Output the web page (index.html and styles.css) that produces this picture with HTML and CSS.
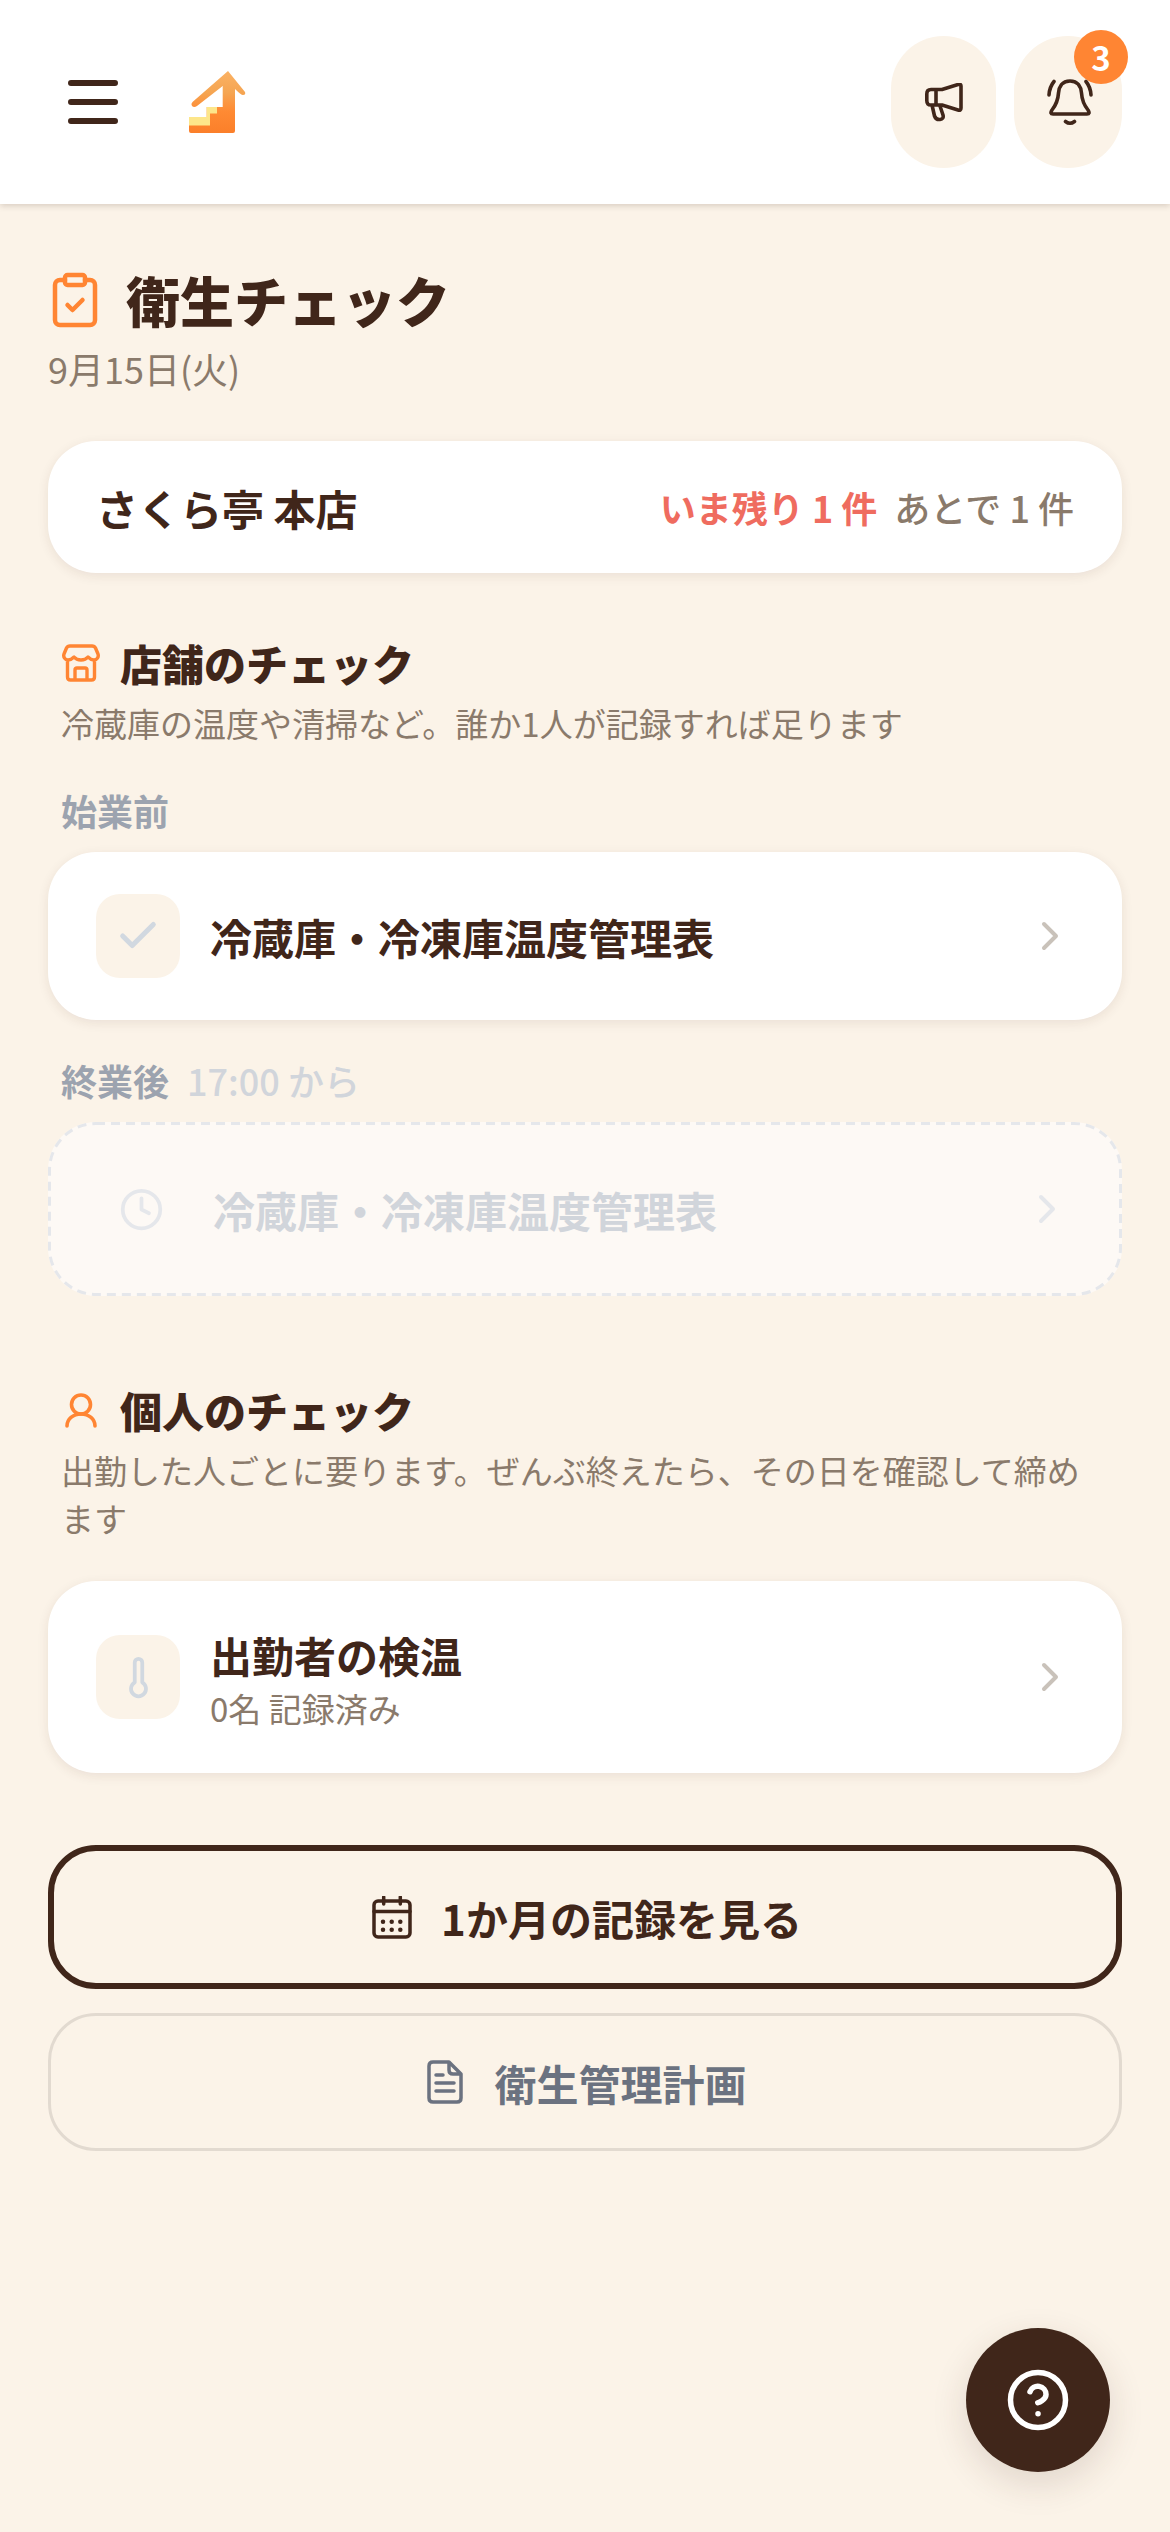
FILE: index.html
```html
<!DOCTYPE html>
<html lang="ja">
<head>
<meta charset="utf-8">
<title>衛生チェック</title>
<link rel="stylesheet" href="styles.css">
</head>
<body>
<header class="topbar">
  <div class="topbar-left">
    <svg class="menu-icon" viewBox="0 0 50 44"><path d="M3 3h44M3 22h44M3 41h44"/></svg>
    <svg class="logo" viewBox="0 0 57 63">
      <defs><linearGradient id="lg" x1="0" y1="0" x2="0" y2="1"><stop offset="0" stop-color="#fbb264"/><stop offset=".35" stop-color="#f5a552"/><stop offset=".65" stop-color="#ff8a33"/><stop offset="1" stop-color="#fb7f2a"/></linearGradient></defs>
      <path fill="url(#lg)" d="M39 0L56 21Q57 24 54 24Q52 24 46 18V60Q46 62 44 62H2Q0 62 0 60V46H17.7V36H33.7V15L8 35Q5 37 3 35Q1.5 33 3.5 31Z"/>
      <path fill="#fde68a" d="M0 46H17.7V36H28V42.500H21V54.500H0Z"/>
    </svg>
  </div>
  <div class="topbar-right">
    <div class="pill pill-a">
      <svg class="megaphone" viewBox="0 0 38 39"><path d="M10 6.500H17L33 1.500Q36 .5 36 3V25Q36 28 33 27L17 22H6Q1.800 22 1.800 17.500V11Q1.800 6.500 6 6.500ZM11 6.500V22M7 22L9.500 33Q11 37 15 36.500Q19 36 18 32L15 23"/></svg>
    </div>
    <div class="pill pill-b">
      <svg class="bell" viewBox="0 0 46 47"><path d="M23 2C15 2 12 8 11.500 14C11 22 9 26 5 31Q2.500 35 6 35H40Q43.500 35 41 31C37 26 35 22 34.500 14C34 8 31 2 23 2ZM18.500 42.500Q23 46 27.500 42.500M2 16Q2.500 8 7 2.500M44 16Q43.500 8 39 2.500"/></svg>
      <span class="badge">3</span>
    </div>
  </div>
</header>

<main class="page">
  <div class="title-row">
    <svg class="icon-title" viewBox="0 0 24 24"><rect x="8" y="2" width="8" height="4" rx="1"/><path d="M16 4h2a2 2 0 0 1 2 2v14a2 2 0 0 1-2 2H6a2 2 0 0 1-2-2V6a2 2 0 0 1 2-2h2"/><path d="m9 14 2 2 4-4"/></svg>
    <h1 class="title">衛生チェック</h1>
  </div>
  <p class="date">9月15日(火)</p>

  <section class="store-card">
    <span class="store-name">さくら亭 本店</span>
    <span class="counts"><span class="count-now">いま残り 1 件</span><span class="count-later">あとで 1 件</span></span>
  </section>

  <section class="section section-store">
    <div class="section-head">
      <svg class="icon-store" viewBox="0 0 38 38"><path d="M8 2H30Q32.500 2 33.500 4L36 10C37 13 35 16 32 16C29.500 16 28 15 26 13C24 15.500 22 16 19 16C16 16 14 15.500 12 13C10 15 8.500 16 6 16C3 16 1 13 2 10L4.500 4Q5.500 2 8 2ZM5.500 16V33Q5.500 36 8.500 36H29.500Q32.500 36 32.500 33V16M13 36V26Q13 24 15 24H23Q25 24 25 26V36"/></svg>
      <h2 class="section-title">店舗のチェック</h2>
    </div>
    <p class="section-sub">冷蔵庫の温度や清掃など。誰か1人が記録すれば足ります</p>

    <div class="slot-label">始業前</div>
    <a class="card">
      <span class="icon-box"><svg class="icon-check" viewBox="0 0 24 24"><path d="M20 6 9 17l-5-5"/></svg></span>
      <span class="card-body"><span class="card-title">冷蔵庫・冷凍庫温度管理表</span></span>
      <svg class="chevron" viewBox="0 0 24 24"><path d="m9 18 6-6-6-6"/></svg>
    </a>

    <div class="slot-label slot-label-later">終業後<span class="slot-time">17:00 から</span></div>
    <a class="card card-locked">
      <svg class="dash-frame"><rect class="dash-rect"/></svg>
      <span class="icon-box icon-box-plain"><svg class="icon-clock" viewBox="0 0 24 24"><circle cx="12" cy="12" r="10"/><path d="M12 6v6l4 2"/></svg></span>
      <span class="card-body"><span class="card-title">冷蔵庫・冷凍庫温度管理表</span></span>
      <svg class="chevron" viewBox="0 0 24 24"><path d="m9 18 6-6-6-6"/></svg>
    </a>
  </section>

  <section class="section section-person">
    <div class="section-head">
      <svg class="icon-user" viewBox="0 0 32 35"><circle cx="16" cy="11.500" r="9.500"/><path d="M2 33C2 26 8 21 16 21C24 21 30 26 30 33"/></svg>
      <h2 class="section-title">個人のチェック</h2>
    </div>
    <p class="section-sub">出勤した人ごとに要ります。ぜんぶ終えたら、その日を確認して締めます</p>
    <a class="card card-person">
      <span class="icon-box"><svg class="icon-thermo" viewBox="0 0 24 24"><path d="M14 4v10.54a4 4 0 1 1-4 0V4a2 2 0 0 1 4 0Z"/></svg></span>
      <span class="card-body"><span class="card-title">出勤者の検温</span><span class="card-sub">0名 記録済み</span></span>
      <svg class="chevron" viewBox="0 0 24 24"><path d="m9 18 6-6-6-6"/></svg>
    </a>
  </section>

  <a class="btn btn-primary">
    <svg class="icon-cal" viewBox="0 0 40 43"><rect x="2" y="5" width="36" height="36" rx="4"/><path d="M2 15.500H38M11.700 1V8M28.300 1V8"/><path class="dots" d="M11 25.700h.01M19.700 25.700h.01M28.300 25.700h.01M11 33.700h.01M19.700 33.700h.01M28.300 33.700h.01"/></svg>
    <span>1か月の記録を見る</span>
  </a>
  <a class="btn btn-secondary">
    <svg class="icon-doc" viewBox="0 0 36 44"><path d="M6 2H22L34 14V38Q34 42 30 42H6Q2 42 2 38V6Q2 2 6 2ZM22 2V10Q22 14 26 14H34M9 15H16M9 23H27M9 31H27"/></svg>
    <span>衛生管理計画</span>
  </a>
</main>

<button class="fab" type="button" aria-label="ヘルプ">
  <svg class="icon-help" viewBox="0 0 24 24"><circle cx="12" cy="12" r="10"/><path d="M9.090 9a3 3 0 0 1 5.830 1c0 2-3 3-3 3"/><path d="M12 17h.01"/></svg>
</button>
</body>
</html>
```
FILE: styles.css
```css
* { box-sizing: border-box; }
html, body { margin: 0; padding: 0; }
body {
  width: 1170px;
  min-height: 2532px;
  background: #fbf3e8;
  color: #40261a;
  font-family: "Noto Sans CJK JP", "Noto Sans", sans-serif;
  position: relative;
}
svg { display: block; flex: none; fill: none; stroke-linecap: round; stroke-linejoin: round; }
h1, h2, p { margin: 0; }

.topbar {
  height: 204px;
  background: #fff;
  display: flex;
  justify-content: space-between;
  align-items: center;
  padding: 0 48px 0 68px;
  box-shadow: 0 2px 6px rgba(64, 38, 26, .18);
}
.topbar-left { display: flex; align-items: center; gap: 71px; }
.menu-icon { width: 50px; height: 44px; stroke: #40261a; stroke-width: 6; margin-top: 0; }
.logo { width: 57px; height: 63px; }
.topbar-right { display: flex; gap: 18px; }
.pill {
  height: 132px;
  background: #fbf3e8;
  border-radius: 54px;
  display: flex;
  align-items: center;
  justify-content: center;
  position: relative;
}
.pill-a { width: 105px; }
.pill-b { width: 108px; }
.megaphone { width: 38px; height: 39px; stroke: #40261a; stroke-width: 3.6; }
.bell { width: 46px; height: 47px; stroke: #40261a; stroke-width: 3.6; margin-left: 3px; }
.badge {
  position: absolute;
  top: -6px;
  right: -6px;
  width: 54px;
  height: 54px;
  border-radius: 50%;
  background: #ff8533;
  color: #fff;
  font-size: 33px;
  font-weight: 700;
  line-height: 54px;
  text-align: center;
}

.page { padding: 63px 48px 0; }
.title-row { display: flex; align-items: center; gap: 21px; margin-left: -3px; }
.icon-title { width: 60px; height: 60px; stroke: #ff8533; stroke-width: 1.8; }
.title { font-size: 54px; font-weight: 900; line-height: 66px; }
.date { font-size: 36px; line-height: 48px; color: #8a7a6b; margin-top: 11px; }

.store-card {
  height: 132px;
  margin-top: 49px;
  background: #fff;
  border-radius: 48px;
  padding: 0 48px;
  display: flex;
  align-items: center;
  justify-content: space-between;
  box-shadow: 0 3px 12px rgba(64, 38, 26, .09);
}
.store-name { font-size: 42px; font-weight: 700; }
.counts { display: flex; gap: 17px; font-size: 36px; }
.count-now { color: #ef6c5f; font-weight: 700; }
.count-later { color: #8a7a6b; font-weight: 500; }

.section-store { margin-top: 60px; }
.section-person { margin-top: 84px; }
.section-head { display: flex; align-items: center; height: 60px; padding-left: 14px; }
.section-title { font-size: 42px; font-weight: 900; line-height: 60px; }
.icon-store { width: 38px; height: 38px; stroke: #ff8533; stroke-width: 3.4; margin-right: 20px; }
.icon-user { width: 32px; height: 35px; stroke: #ff8533; stroke-width: 3.6; margin: 0 23px 0 3px; }
.section-sub {
  font-size: 33px;
  line-height: 48px;
  color: #8a7a6b;
  margin-top: 6px;
  padding: 0 30px 0 13px;
}

.slot-label {
  font-size: 36px;
  font-weight: 700;
  line-height: 54px;
  color: #9ca3af;
  margin: 36px 0 15px;
  padding-left: 13px;
}
.slot-label-later { margin-top: 33px; }
.slot-time { font-weight: 500; color: #d1d5db; margin-left: 18px; }

.card {
  display: flex;
  align-items: center;
  gap: 30px;
  background: #fff;
  border-radius: 48px;
  padding: 42px 48px;
  box-shadow: 0 3px 12px rgba(64, 38, 26, .09);
}
.card-locked {
  position: relative;
  background: #fdf9f5;
  border: 3px solid transparent;
  box-shadow: none;
}
.dash-frame {
  position: absolute;
  top: -3px;
  left: -3px;
  width: calc(100% + 6px);
  height: calc(100% + 6px);
}
.dash-rect {
  x: 1.5px;
  y: 1.5px;
  width: calc(100% - 3px);
  height: calc(100% - 3px);
  rx: 46.5px;
  ry: 46.5px;
  stroke: #e5e7eb;
  stroke-width: 3;
  stroke-dasharray: 9 6;
  stroke-linecap: butt;
}
.card-person { margin-top: 39px; }
.icon-box {
  width: 84px;
  height: 84px;
  flex: none;
  border-radius: 24px;
  background: #fbf3e8;
  display: flex;
  align-items: center;
  justify-content: center;
}
.icon-box-plain { background: transparent; }
.card-body { flex: 1; display: flex; flex-direction: column; }
.card-title { font-size: 42px; font-weight: 700; line-height: 63px; }
.card-sub { font-size: 33px; line-height: 45px; color: #8a7a6b; }
.card-locked .card-title { color: #d1d5db; }
.icon-check { width: 46px; height: 46px; stroke: #d1d8e0; stroke-width: 2.6; }
.icon-clock { width: 45px; height: 45px; stroke: #e5e7eb; stroke-width: 2; }
.icon-thermo { width: 45px; height: 45px; stroke: #d1d8e0; stroke-width: 2; }
.chevron { width: 48px; height: 48px; stroke: #c9c2ba; stroke-width: 2; }
.card-locked .chevron { stroke: #e5e7eb; }

.btn {
  display: flex;
  align-items: center;
  justify-content: center;
  font-size: 42px;
  font-weight: 700;
  border-radius: 48px;
  padding-left: 4px;
}
.btn-primary {
  height: 144px;
  margin-top: 72px;
  border: 6px solid #40261a;
  gap: 29px;
}
.btn-secondary {
  height: 138px;
  margin-top: 24px;
  border: 3px solid #e2dad0;
  color: #6b7280;
  gap: 31px;
}
.icon-cal { width: 40px; height: 43px; stroke: #40261a; stroke-width: 3.5; }
.icon-cal .dots { stroke-width: 4.5; }
.icon-doc { width: 36px; height: 44px; stroke: #6b7280; stroke-width: 3.5; }

.fab {
  position: fixed;
  left: 966px;
  top: 2328px;
  width: 144px;
  height: 144px;
  border: 0;
  border-radius: 50%;
  background: #40261a;
  display: flex;
  align-items: center;
  justify-content: center;
  box-shadow: 0 12px 36px rgba(64, 38, 26, .14);
}
.icon-help { width: 66px; height: 66px; stroke: #fff; stroke-width: 2; }
```
